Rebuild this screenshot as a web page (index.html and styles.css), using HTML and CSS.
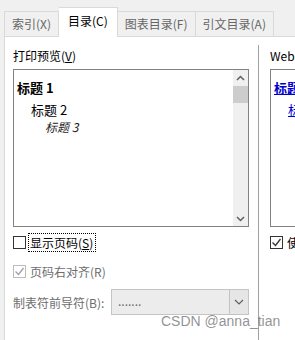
FILE: index.html
```html
<!DOCTYPE html>
<html lang="zh">
<head>
    <meta charset="UTF-8">
    <title>目录</title>
    <link rel="stylesheet" href="styles.css">
</head>
<body>
    <div class="tabs">
        <div class="tab">索引(X)</div>
        <div class="tab active">目录(C)</div>
        <div class="tab">图表目录(F)</div>
        <div class="tab">引文目录(A)</div>
    </div>
    <div class="panel">
        <div class="col-left">
            <div class="label">打印预览(<u>V</u>)</div>
            <div class="preview">
                <div class="preview-text">
                    <div class="h1">标题 1</div>
                    <div class="h2">标题 2</div>
                    <div class="h3">标题 3</div>
                </div>
                <div class="scrollbar">
                    <svg class="arrow" width="15" height="15" viewBox="0 0 15 15"><path d="M4 9 L7.5 5.5 L11 9" fill="none" stroke="#606060" stroke-width="1.5"/></svg>
                    <div class="thumb"></div>
                    <div class="track"></div>
                    <svg class="arrow" width="15" height="15" viewBox="0 0 15 15"><path d="M4 6 L7.5 9.5 L11 6" fill="none" stroke="#606060" stroke-width="1.5"/></svg>
                </div>
            </div>
            <div class="check-row">
                <span class="box"></span>
                <span class="focus">显示页码(<u>S</u>)</span>
            </div>
            <div class="check-row disabled">
                <span class="box checked">
                    <svg width="11" height="11" viewBox="0 0 11 11"><path d="M1.5 5.5 L4.5 8.5 L9.5 2" fill="none" stroke="#a0a0a0" stroke-width="1.3"/></svg>
                </span>
                <span>页码右对齐(R)</span>
            </div>
            <div class="leader-row">
                <span class="leader-label">制表符前导符(B):</span>
                <div class="select">
                    <span class="select-value">.......</span>
                    <span class="select-btn">
                        <svg width="10" height="6" viewBox="0 0 10 6"><path d="M1 1 L5 5 L9 1" fill="none" stroke="#606060" stroke-width="1.2"/></svg>
                    </span>
                </div>
            </div>
        </div>
        <div class="divider"></div>
        <div class="col-right">
            <div class="label">Web 预览(W)</div>
            <div class="web-preview">
                <div class="link">标题 1</div>
                <div class="link2">标题 2</div>
            </div>
            <div class="check-row">
                <span class="box">
                    <svg width="11" height="11" viewBox="0 0 11 11"><path d="M1.5 5.5 L4.5 8.5 L9.5 2" fill="none" stroke="#333" stroke-width="1.3"/></svg>
                </span>
                <span>使用超链接而不使用页码(H)</span>
            </div>
        </div>
    </div>
    <div class="watermark">CSDN @anna_tian</div>
</body>
</html>
```

FILE: styles.css
```css
body {
    margin: 0;
    width: 295px;
    height: 340px;
    overflow: hidden;
    background-color: #f0f0f0;
    font-family: "Noto Sans CJK SC", "Liberation Sans", sans-serif;
    font-size: 12px;
    color: #1a1a1a;
    position: relative;
}
.tabs {
    display: flex;
    align-items: flex-end;
    height: 36px;
    padding-left: 4px;
}
.tab {
    height: 25px;
    line-height: 23px;
    padding: 0 7px;
    border: 1px solid #d9d9d9;
    border-bottom: none;
    border-left: none;
    color: #666;
    background-color: #f0f0f0;
    white-space: nowrap;
    box-sizing: border-box;
}
.tab:first-child {
    border-left: 1px solid #d9d9d9;
}
.tab.active {
    height: 30px;
    line-height: 25px;
    padding: 0 9px;
    background-color: #fff;
    color: #000;
    margin-bottom: -1px;
    position: relative;
    border-left: none;
}
.panel {
    display: flex;
    margin-left: 4px;
    height: 304px;
    background-color: #fff;
    border-left: 1px solid #d9d9d9;
    border-top: 1px solid #d9d9d9;
    box-sizing: border-box;
}
.col-left {
    width: 236px;
    margin-left: 8px;
    flex-shrink: 0;
}
.label {
    margin-top: 10px;
    height: 17px;
    line-height: 17px;
    color: #000;
}
.preview {
    display: flex;
    margin-top: 5px;
    height: 158px;
    border: 1px solid #828282;
    box-sizing: border-box;
}
.preview-text {
    flex: 1;
    padding-top: 8px;
    color: #000;
}
.h1 {
    font-weight: bold;
    font-size: 13px;
    line-height: 20px;
    padding-left: 3px;
}
.h2 {
    font-size: 13px;
    line-height: 18px;
    padding-left: 17px;
    margin-top: 3px;
}
.h3 {
    font-style: italic;
    line-height: 15px;
    padding-left: 31px;
    color: #222;
}
.scrollbar {
    width: 15px;
    display: flex;
    flex-direction: column;
    background-color: #f0f0f0;
}
.arrow {
    display: block;
    flex-shrink: 0;
    margin-top: 1px;
}
.thumb {
    height: 17px;
    background-color: #cdcdcd;
}
.track {
    flex: 1;
}
.check-row {
    display: flex;
    align-items: center;
    gap: 4px;
    margin-top: 7px;
    height: 17px;
    color: #000;
}
.box {
    width: 13px;
    height: 13px;
    border: 1px solid #333;
    box-sizing: border-box;
    background-color: #fff;
    display: flex;
    align-items: center;
    justify-content: center;
    flex-shrink: 0;
}
.focus {
    outline: 1px dotted #000;
    outline-offset: 0;
    padding: 0 2px 0 1px;
    margin-left: -1px;
}
.check-row.disabled {
    margin-top: 12px;
    color: #6d6d6d;
}
.check-row.disabled .box {
    border-color: #bcbcbc;
}
.leader-row {
    display: flex;
    align-items: center;
    margin-top: 9px;
    height: 26px;
    color: #6d6d6d;
}
.leader-label {
    width: 98px;
    flex-shrink: 0;
}
.select {
    display: flex;
    flex: 1;
    height: 26px;
    border: 1px solid #c4c4c4;
    background-color: #ececec;
    box-sizing: border-box;
}
.select-value {
    flex: 1;
    padding-left: 6px;
    line-height: 22px;
    color: #6d6d6d;
}
.select-btn {
    width: 18px;
    border-left: 1px solid #c4c4c4;
    display: flex;
    align-items: center;
    justify-content: center;
    background-color: #e6e6e6;
}
.divider {
    width: 1px;
    margin-left: 9px;
    margin-top: 8px;
    background-color: #a0a0a0;
}
.col-right {
    margin-left: 11px;
    flex: 1;
    min-width: 0;
    white-space: nowrap;
    overflow: hidden;
}
.web-preview {
    margin-top: 5px;
    height: 158px;
    border: 1px solid #828282;
    border-right: none;
    box-sizing: border-box;
    padding-top: 8px;
}
.link {
    color: #0000cc;
    font-weight: bold;
    font-size: 13px;
    line-height: 20px;
    padding-left: 3px;
    text-decoration: underline;
}
.link2 {
    color: #0000cc;
    font-size: 13px;
    line-height: 18px;
    padding-left: 17px;
    margin-top: 3px;
    text-decoration: underline;
}
.watermark {
    position: absolute;
    left: 161px;
    top: 313px;
    font-family: "Liberation Sans", sans-serif;
    font-size: 14px;
    color: rgba(110, 110, 110, 0.75);
}
```
